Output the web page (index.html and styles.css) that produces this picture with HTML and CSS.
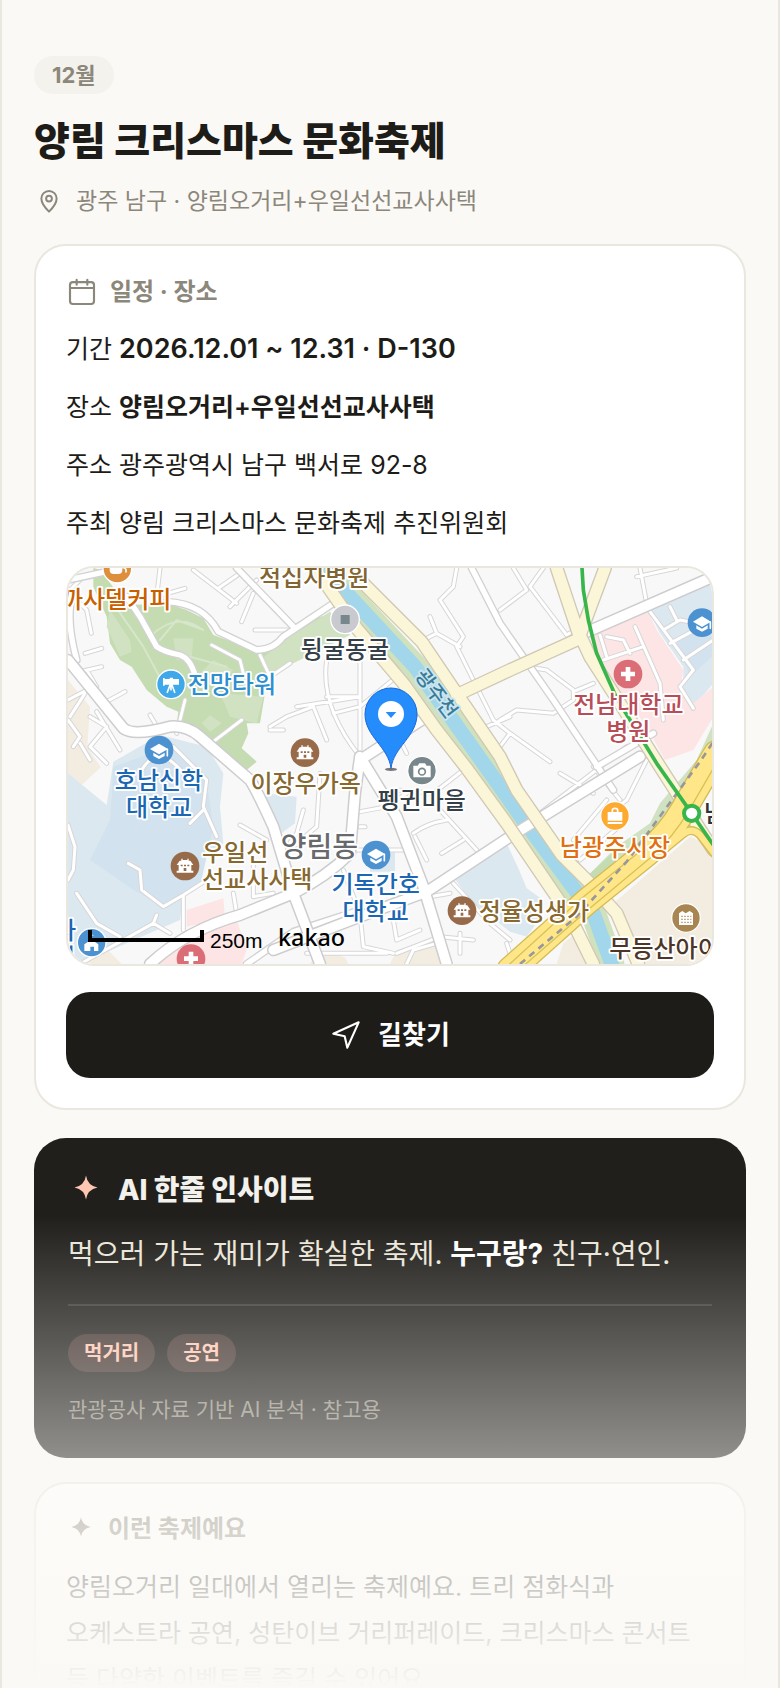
FILE: index.html
```html
<!DOCTYPE html>
<html lang="ko">
<head>
    <meta charset="UTF-8">
    <meta name="viewport" content="width=device-width, initial-scale=1.0">
    <title>양림 크리스마스 문화축제</title>
    <link rel="stylesheet" href="styles.css">
</head>
<body>
    <main class="sheet">
        <header class="head">
            <span class="month">12월</span>
            <h1>양림 크리스마스 문화축제</h1>
            <p class="place">
                <svg class="icon30" viewBox="0 0 24 24"><path d="M12 20.5C9 17.6 5.9 14 5.9 10a6.1 6.1 0 0 1 12.2 0c0 4-3.1 7.6-6.1 10.500z"/><circle cx="12" cy="10" r="2.3"/></svg>
                광주 남구 · 양림오거리+우일선선교사사택
            </p>
        </header>

        <section class="card">
            <h2 class="card-title">
                <svg class="icon32" viewBox="0 0 24 24"><rect x="3" y="4.6" width="18" height="16.4" rx="2.2"/><path d="M3 9h18M8 2.800v3.700M16 2.800v3.700"/></svg>
                일정 · 장소
            </h2>
            <ul class="info">
                <li>기간 <b class="date">2026.12.01 ~ 12.31 · D-130</b></li>
                <li>장소 <b>양림오거리+우일선선교사사택</b></li>
                <li>주소 광주광역시 남구 백서로 92-8</li>
                <li>주최 양림 크리스마스 문화축제 추진위원회</li>
            </ul>
            <div class="map">
                <svg viewBox="24 24 1932 1188" role="img" aria-label="행사장 지도">
                    <defs>
                        <g id="school"><circle r="43"/><path class="w" d="M-27-3 0-19 27-3 0 13z"/><path class="w" d="M-17 8 0 18 17 8v10L0 27-17 18z"/><path class="wl" d="M25-2v19"/></g>
                        <g id="house"><circle r="43"/><path class="w" d="M-11-22h4v4h14v-4h4v6h5l9 13h-6v17h6v6h-50v-6h6V-3h-6l9-13h5z"/><path d="M-4 15V6h8v9zM-13-4h6v5h-6zM-3-4h6v5h-6zM7-4h6v5H7z"/></g>
                        <g id="cross"><circle r="43"/><path class="w" d="M-7-21H7V-7H21V7H7V21H-7V7H-21V-7H-7z"/></g>
                        <path id="lanes" d="M40 110 80 150 94 220M60 60 30 90M75 280 125 265M60 335 125 320M110 380 80 330M130 430 195 395M24 420 90 385M30 470 75 400M24 480 60 530 40 560M60 550 90 600M90 470 140 500 90 560 140 610M110 455 180 570M270 465 300 515M350 520 375 420M300 24 290 110 375 85M400 30 530 130M475 85 540 40M510 140 590 60M545 185 580 100M585 210H700M455 255 540 300 550 340M460 545 545 480M600 285 630 350 690 310M630 510H670M630 500 680 470 760 440 800 540M710 440 900 410M800 300Q780 440 900 590M900 300V600M800 410H900M820 460 900 440 1010 350M1110 170 1130 220 1090 240M1130 220 1200 260M1190 24 1180 80 1140 120 1210 230 1190 260 1260 400 1300 480 1350 520M1320 150 1400 90 1360 24M1410 80 1520 225 1560 200M1450 24 1410 80M1740 24 1760 130M1730 50 1850 24M1230 600 1280 500 1350 470M1320 480 1370 450 1480 460 1540 420 1540 390 1460 330 1400 320M1540 395 1600 370M1320 560 1350 520 1470 605M1620 225 1640 290M1640 230 1690 240 1710 280M1630 300 1750 260M1725 200 1800 370 1810 480M1770 155 1900 330 1860 380 1900 445M1810 210 1860 180 1960 200M1830 140 1850 180M1830 250 1960 180M1870 300 1960 240M1010 520 1040 580M900 755 980 740 1040 700M900 800H915M870 870H1040M1060 820Q1100 790 1160 780M1065 830 1100 900M1140 750 1250 870M1145 880 1210 840M1010 690 1120 700 1210 630M1110 1010 1170 1000M1180 970 1290 1090 1350 1140M730 750 710 820 660 890M780 640 770 800 700 860M540 795 620 840M580 1010V900M580 1010 640 1000M370 1010V1110M520 1000 530 1060M50 1000 110 1090 180 1130M60 1212 280 1090 290 1065M280 1090 330 1120M205 910 240 930 245 990 310 1040 370 1005 440 960M24 795 45 860 40 930 24 960M240 640Q290 540 370 640M340 560 440 660 430 740 470 830M430 750 390 790M850 930 900 1060 910 1160 1000 1180M1010 1180 1140 1130 1240 1140M1040 1212 1060 1170 1130 1150M1200 1120V1180M1000 1080 1010 1140 1080 1110M1440 760 1700 560M1540 840 1640 720M1560 900 1700 780M1600 620 1680 720M1760 600 1700 720 1660 750M1500 640 1600 700M1340 1150 1360 1212M740 1180H980"/>
                        <path id="streets" d="M190 24 24 60M40 100Q15 170 50 300M200 110 240 170 290 260Q310 275 360 285 390 295 405 345M320 125Q430 130 475 215L590 270Q640 270 670 230L820 130M530 24 700 200M1235 24 1320 190 1480 420 1660 690M560 1212 700 1115 900 1050M1610 620 1780 520"/>
                        <path id="roads" d="M24 300 190 505Q220 530 330 500 380 495 420 530L570 660Q590 690 640 800L700 1000 780 1212M270 1212Q380 1110 540 1065L700 1000Q800 950 870 880L885 700 900 590 1010 770 1090 980 1160 1212M900 600 1100 470M1560 225 1960 50M640 1170 900 1070 1100 995 1350 830 1520 725 1740 590"/>
                        <path id="avenues" d="M840 0 920 80 1085 245 1190 400 1320 590 1370 690 1505 885 1590 970 1670 1060 1735 1212M740 0 800 75 890 205 1030 370 1130 510 1220 625 1340 790 1530 1070 1600 1212M1190 405 1350 330 1560 235 1490 24M1635 24 1560 225 1590 290 1680 430 1800 620 1870 730 1960 870"/>
                        <path id="highway" d="M1350 1230 1580 1025 1760 880Q1830 820 1870 750L1970 580"/>
                        <path id="ramp" d="M1780 895 1870 822Q1895 800 1920 825L1970 890"/>
                        <path id="river" d="M790 24 860 100 1065 320 1185 490 1320 680 1390 780 1545 990 1600 1060 1655 1212"/>
                    </defs>

                    <!-- 녹지, 학교, 병원 구역 -->
                    <path class="land" d="M24 24h1932v1188H24z"/>
                    <path class="beige" d="M24 360 90 440 82 560 122 622 60 680 24 640zM45 1212l80-60 60 60zM750 1212l25-40 80 20 10 20zM990 1212l20-42 115-35 25 77zM1655 1035l235-205 70 30v352h-230l-40-102zM1510 1150l50-40 40 102h-110z"/>
                    <path class="green" d="M100 24v56l40 90 10 80 30 50 35 20 45 70 60 50 35 15-5 35 50 40 60 30 60 50 40 20 30-25-45-40 20-45-5-30h40l15-90 20-75 80-60 175-75-20-45-140 40-110 75-50 5-110-40-30-50-50-25-60-20-100 5-50-40-50-66z"/>
                    <path class="green2" d="M150 150l60 90 5 35-35 15-40-90zM340 235h60l-5 60-45 5zM460 300l60 30-40 60-70-40zM600 300l90-70 120-75 60 70-70 35-100 50-70 35-20-20zM425 490l25-25 35 25-35 25zM480 400l130 10-20 80-80-20z"/>
                    <path class="thin" d="M160 130 250 260 320 390M270 230Q350 150 430 210L350 180 300 240M390 290 500 320"/>
                    <path class="blue" d="M24 640l116 95 20-130 140-80 140 35 50 80-10 100 10 110-60 50-60 110-10 70-160 70-140 62h-36zM610 700l100 10-5 80-55 40zM930 870h75v65h-75zM1180 950l160-100 35 75 25 60 50 35-10 55-40 55-50-15-120-95zM1765 150l135-60 60-20v300l-60 70-30-40v-80l-70-100z"/>
                    <path class="blue2" d="M160 620l170-60 110 100 20 140-40 180-100 65-100-55-130-90 60-120zM1850 250l70-60 36 40v60l-66 60z"/>
                    <path class="pink" d="M380 1050l110-35 5 60-115 25zM270 1212l90-92 170-40 30 90-15 42zM1590 230l175-75 25 55 80 120-10 70 40 30 60-50v90l-60 100-85 30-55-100-140-190z"/>
                    <path class="green2" d="M1960 490 1910 600 1800 730 1770 790 1670 860 1580 950 1600 985 1780 860 1900 690 1960 560z"/>
                    <path class="green" d="M1690 850 1580 950 1600 985 1650 940z"/>

                    <use class="lane-edge" href="#lanes"/>
                    <use class="lane" href="#lanes"/>
                    <use class="street-edge" href="#streets"/>
                    <use class="street" href="#streets"/>

                    <!-- 광주천 -->
                    <use class="bank" href="#river"/>
                    <use class="river" href="#river"/>

                    <!-- 큰길 -->
                    <use class="road-edge" href="#roads"/>
                    <use class="road" href="#roads"/>
                    <use class="avenue-edge" href="#avenues"/>
                    <use class="avenue" href="#avenues"/>
                    <use class="ramp-edge" href="#ramp"/>
                    <use class="highway-edge" href="#highway"/>
                    <use class="ramp" href="#ramp"/>
                    <use class="highway" href="#highway"/>
                    <path class="highway-line" d="M1365 1240 1595 1040 1775 890Q1840 830 1885 755L1980 590M1335 1225 1565 1015 1745 870"/>
                    <path class="rail" d="M1380 1212 1550 1070 1700 905 1770 810 1920 605 1960 545"/>
                    <path class="subway" d="M1566 24 1570 90 1585 180 1610 280 1670 415 1790 610 1895 760 1960 855"/>
                    <circle class="station" cx="1895" cy="760" r="23"/>

                    <!-- 장소 아이콘 -->
                    <g class="poi">
                        <g fill="#de8f3c" transform="translate(172 26)"><circle r="43"/><path class="w" d="M-23-10h38v14q0 12-12 12h-14q-12 0-12-12z"/><path class="wl" d="M14-4q14 0 12 14"/></g>
                        <g fill="#3fa8ea" transform="translate(333 373)"><circle r="43"/><path class="w" d="M-24-19h5v3h15v-4h10v4h18V1H6v3h-10V1h-15v3h-5z"/><path class="wl" d="M-3 2-11 24M3 2 11 24M0 2V16"/></g>
                        <use href="#school" fill="#4c91d0" x="297" y="570"/>
                        <use href="#school" fill="#4c91d0" x="1926" y="188"/>
                        <use href="#school" fill="#4c91d0" x="948" y="885"/>
                        <use href="#house" fill="#976b49" x="735" y="578"/>
                        <use href="#house" fill="#976b49" x="375" y="918"/>
                        <use href="#house" fill="#976b49" x="1206" y="1052"/>
                        <use href="#cross" fill="#da6d75" x="1704" y="342"/>
                        <use href="#cross" fill="#da6d75" x="393" y="1196"/>
                        <g fill="#c8cad0" transform="translate(855 178)"><circle r="43"/><path fill="#77878c" d="M-13-13h27v27h-27z"/></g>
                        <g fill="#77878c" transform="translate(1086 632)"><circle r="43"/><path class="w" d="M-26-15h13l5-7h17l5 7h12v35h-52z"/><circle class="lens" cy="3" r="10"/></g>
                        <g fill="#fdaa31" transform="translate(1665 768)"><circle r="43"/><path class="w" d="M-22-12h44v26h-44zM-22 18h44v6h-44z"/><path class="wl" d="M-8-8v-10q0-5 8-5t8 5v10"/></g>
                        <g fill="#a98651" transform="translate(1878 1074)"><circle r="43"/><path class="w" d="M-21 21v-35l10-7 10 7 12-7 10 7v35z"/><path class="dots" d="M-14-5h30M-14 4h30M-14 13h30"/></g>
                        <g fill="#4c91d0" transform="translate(95 1148)"><circle r="43"/><path class="w" d="M-2-22v12l22 15v20H7V12h-11v13h-18V5l16-11v-22l14 7z"/></g>
                    </g>

                    <!-- 지명 -->
                    <g class="label">
                        <text x="334" y="145" text-anchor="end" fill="#c86000">까사델커피</text>
                        <text x="597" y="78" fill="#826432">적십자병원</text>
                        <text x="855" y="293" text-anchor="middle" fill="#343f48">뒹굴동굴</text>
                        <text x="383" y="398" fill="#2e8fd0">전망타워</text>
                        <text x="297" y="688" text-anchor="middle" fill="#1b67b3">호남신학<tspan x="297" dy="79">대학교</tspan></text>
                        <text x="737" y="695" text-anchor="middle" fill="#87682f">이장우가옥</text>
                        <text x="1085" y="748" text-anchor="middle" fill="#343f48">펭귄마을</text>
                        <text x="1705" y="460" text-anchor="middle" fill="#b84d57">전남대학교<tspan x="1705" dy="79">병원</tspan></text>
                        <text class="stream" x="1130" y="422" text-anchor="middle" transform="rotate(53 1130 400)">광주천</text>
                        <text x="1665" y="888" text-anchor="middle" fill="#e07010">남광주시장</text>
                        <text x="426" y="903" fill="#87682f">우일선<tspan x="426" dy="80">선교사사택</tspan></text>
                        <text class="district" x="778" y="890" text-anchor="middle">양림동</text>
                        <text x="947" y="1000" text-anchor="middle" fill="#1b67b3">기독간호<tspan x="947" dy="79">대학교</tspan></text>
                        <text x="1256" y="1080" fill="#87682f">정율성생가</text>
                        <text x="1648" y="1191" fill="#4b3628">무등산아이</text>
                        <text x="1932" y="785" fill="#333333">남</text>
                        <text x="48" y="1137" text-anchor="end" fill="#1b67b3">사</text>
                        <text x="44" y="1217" text-anchor="end" fill="#1b67b3">대</text>
                    </g>

                    <path class="scale" d="M90 1110V1140H426V1110"/>
                    <text class="scale-text" x="450" y="1163">250m</text>
                    <text class="brand" x="654" y="1157">kakao</text>

                    <ellipse class="shadow" cx="993" cy="628" rx="18" ry="5"/>
                    <path class="pin" d="M993 624C985 560 915 530 915 462A78 78 0 0 1 1071 462C1071 530 1001 560 993 624z"/>
                    <circle fill="#fff" cx="993" cy="462" r="39"/>
                    <path fill="#258cfb" d="M977 456h32l-16 18z"/>
                </svg>
            </div>
            <button class="route" type="button">
                <svg class="icon32" viewBox="0 0 24 24"><path d="M2.500 11 21.500 2.500 13 21.500 11 13z"/></svg>
                길찾기
            </button>
        </section>

        <section class="insight">
            <h2>
                <svg class="star" viewBox="0 0 36 36"><path d="M18 3.500Q19.500 13.500 29.500 15.500 19.500 17.500 18 27.500 16.500 17.500 6.500 15.500 16.500 13.500 18 3.500z"/></svg>
                AI 한줄 인사이트
            </h2>
            <p class="line">먹으러 가는 재미가 확실한 축제. <b>누구랑?</b> 친구·연인.</p>
            <hr>
            <ul class="tags">
                <li>먹거리</li>
                <li>공연</li>
            </ul>
            <p class="note">관광공사 자료 기반 AI 분석 · 참고용</p>
        </section>

        <section class="card about">
            <h2 class="card-title">
                <svg class="star small" viewBox="0 0 36 36"><path d="M18 4Q19.500 13.500 29.500 15.500 19.500 17.500 18 27 16.500 17.500 6.500 15.500 16.500 13.500 18 4z"/></svg>
                이런 축제예요
            </h2>
            <p class="desc">양림오거리 일대에서 열리는 축제예요. 트리 점화식과 오케스트라 공연, 성탄이브 거리퍼레이드, 크리스마스 콘서트 등 다양한 이벤트를 즐길 수 있어요.</p>
        </section>
        <div class="fade"></div>
    </main>
</body>
</html>
```

FILE: styles.css
```css
*{
    box-sizing: border-box;
}
body,h1,h2,p,ul{
    margin: 0;
    padding: 0;
}
ul{
    list-style: none;
}
body{
    background: #faf9f5;
    color: #1d1c18;
    font-family: Inter, "Noto Sans CJK KR", sans-serif;
    word-break: keep-all;
}
.sheet{
    position: relative;
    height: 100vh;
    overflow: hidden;
    padding: 56px 32px 0;
    border: 0 solid #eae7df;
    border-width: 0 2px;
}
svg{
    flex: none;
    fill: none;
    stroke-linecap: round;
    stroke-linejoin: round;
}
.icon30,
.icon32{
    stroke: currentColor;
    stroke-width: 1.6;
}
.icon30{
    width: 30px;
    height: 30px;
}
.icon32{
    width: 32px;
    height: 32px;
}

/* 제목 */
.month{
    display: block;
    width: fit-content;
    padding: 0 18px;
    border-radius: 19px;
    background: #f3f2ed;
    color: #8c877b;
    font-size: 22px;
    font-weight: 700;
    line-height: 38px;
}
h1{
    margin-top: 23px;
    font-size: 39px;
    font-weight: 800;
    line-height: 48px;
}
.place{
    display: flex;
    align-items: center;
    gap: 12px;
    margin-top: 20px;
    color: #8c877b;
    font-size: 23px;
    line-height: 32px;
}

/* 카드 */
.card{
    margin-top: 27px;
    padding: 30px;
    border: 2px solid #eae7df;
    border-radius: 32px;
    background: #fff;
}
.card-title{
    display: flex;
    align-items: center;
    gap: 12px;
    color: #8c877b;
    font-size: 24px;
    font-weight: 700;
    line-height: 32px;
}
.info{
    display: flex;
    flex-direction: column;
    gap: 16px;
    margin-top: 20px;
    font-size: 25px;
    line-height: 42px;
}
.info b{
    font-weight: 600;
}
.info .date{
    font-size: 27px;
}
.route{
    display: flex;
    align-items: center;
    justify-content: center;
    gap: 16px;
    width: 100%;
    height: 86px;
    margin-top: 26px;
    border: 0;
    border-radius: 24px;
    background: #1d1c18;
    color: #fff;
    font-family: inherit;
    font-size: 26px;
    font-weight: 700;
    line-height: 32px;
    cursor: pointer;
}

/* 지도 */
.map{
    margin-top: 22px;
    border: 2px solid #eae7df;
    border-radius: 28px;
    overflow: hidden;
}
.map svg{
    display: block;
    width: 100%;
    height: auto;
}
.land{ fill: #f8f8f8; }
.beige{ fill: #f3ece0; }
.green{ fill: #c5dbb1; }
.green2{ fill: #d0e2c2; }
.blue{ fill: #dce8f0; }
.blue2{ fill: #d2e3ef; }
.pink{ fill: #fce5e4; }
.thin{ stroke: #d6e6ca; stroke-width: 6; }
.lane-edge{ stroke: #d6d6d8; stroke-width: 15; }
.lane{ stroke: #fff; stroke-width: 9; }
.street-edge{ stroke: #d2d2d4; stroke-width: 24; }
.street{ stroke: #fff; stroke-width: 16; }
.road-edge{ stroke: #cdcdcf; stroke-width: 38; }
.road{ stroke: #fff; stroke-width: 29; }
.bank{ stroke: #d0e1bd; stroke-width: 76; }
.river{ stroke: #a2d6ea; stroke-width: 44; }
.avenue-edge{ stroke: #d0c8b4; stroke-width: 42; }
.avenue{ stroke: #fbf6d7; stroke-width: 34; }
.ramp-edge{ stroke: #d3bc55; stroke-width: 26; }
.ramp{ stroke: #ffe789; stroke-width: 18; }
.highway-edge{ stroke: #d3bc55; stroke-width: 82; }
.highway{ stroke: #ffe789; stroke-width: 74; }
.highway-line{ stroke: #d8c258; stroke-width: 4; }
.rail{
    stroke: #98989c;
    stroke-width: 8;
    stroke-dasharray: 20 16;
    stroke-linecap: butt;
}
.subway{ stroke: #38b54b; stroke-width: 11; }
.station{ fill: #fff; stroke: #38b54b; stroke-width: 12; }
.poi circle{
    stroke: #fff;
    stroke-width: 4;
}
.w{ fill: #fff; }
.wl{ fill: none; stroke: #fff; stroke-width: 5; }
.poi .lens{ fill: #fff; stroke: #77878c; stroke-width: 5; }
.dots{ stroke: #a98651; stroke-width: 4; stroke-dasharray: 4 5; stroke-linecap: butt; }
.label{
    font-family: "Noto Sans CJK KR", sans-serif;
    font-size: 72px;
    font-weight: 500;
    stroke: #fff;
    stroke-width: 11;
    paint-order: stroke;
}
.label .stream{
    font-size: 60px;
    fill: #3c7b96;
    stroke: #c8e6f2;
}
.label .district{
    font-size: 84px;
    fill: #68696c;
}
.scale{
    stroke: #000;
    stroke-width: 12;
    stroke-linecap: butt;
    stroke-linejoin: miter;
}
.scale-text{
    fill: #000;
    font: 63px "Liberation Sans", sans-serif;
}
.brand{
    fill: #000;
    font: 500 70px "Noto Sans", sans-serif;
}
.shadow{ fill: #777; }
.pin{ fill: #258cfb; stroke: #1768dc; stroke-width: 3; }

/* AI 인사이트 */
.insight{
    margin-top: 28px;
    padding: 34px;
    border-radius: 32px;
    background: #201f1b;
    color: #f3f1ec;
}
.insight h2{
    display: flex;
    align-items: center;
    gap: 14px;
    font-size: 28px;
    font-weight: 800;
    line-height: 36px;
}
.star{
    width: 36px;
    height: 36px;
    fill: #ffc6b2;
}
.line{
    margin-top: 24px;
    color: #ebe5d9;
    font-size: 28px;
    line-height: 44px;
}
.line b{
    color: #fff;
    font-weight: 700;
}
hr{
    height: 2px;
    margin: 28px 0;
    border: 0;
    background: #3a3935;
}
.tags{
    display: flex;
    gap: 12px;
}
.tags li{
    padding: 0 16px;
    border-radius: 19px;
    background: #43342f;
    color: #ffc6b2;
    font-size: 20px;
    font-weight: 600;
    line-height: 38px;
}
.note{
    margin-top: 24px;
    color: #8c877b;
    font-size: 21px;
    line-height: 28px;
}

/* 축제 소개 */
.about{
    margin-top: 24px;
}
.about .card-title{
    line-height: 30px;
}
.small{
    width: 30px;
    height: 30px;
    fill: #8c877b;
}
.desc{
    margin-top: 20px;
    font-size: 25px;
    line-height: 46px;
}
.fade{
    position: absolute;
    left: -2px;
    right: -2px;
    bottom: 0;
    height: 28vh;
    background: linear-gradient(rgba(250, 249, 245, 0), #faf9f5);
    pointer-events: none;
}
```
